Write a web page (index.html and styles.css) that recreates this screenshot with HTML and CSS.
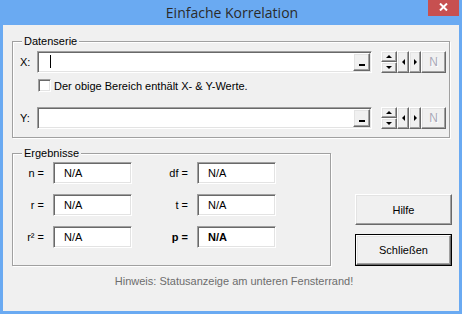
FILE: index.html
```html
<!DOCTYPE html>
<html lang="de">
<head>
<meta charset="utf-8">
<title>Einfache Korrelation</title>
<link rel="stylesheet" href="styles.css">
</head>
<body>
<div class="window">
  <div class="titlebar">
    <span class="title">Einfache Korrelation</span>
    <div class="close">
      <svg width="9" height="8" viewBox="0 0 9 8"><path d="M1 0.5 L8 7.5 M8 0.5 L1 7.5" stroke="#fff" stroke-width="2"/></svg>
    </div>
  </div>
  <div class="client">
    <div class="group g1">
      <span class="legend">Datenserie</span>
      <div class="row">
        <span class="lbl">X:</span>
        <div class="refedit">
          <span class="caret"></span>
          <div class="ddbtn raised"><span class="bar"></span></div>
        </div>
        <div class="spin">
          <div class="raised half"><span class="tri up"></span></div>
          <div class="raised half"><span class="tri down"></span></div>
        </div>
        <div class="raised arr"><span class="tri left"></span></div>
        <div class="raised arr"><span class="tri right"></span></div>
        <div class="raised nbtn">N</div>
      </div>
      <div class="check"><span class="cbox"></span><span>Der obige Bereich enthält X- &amp; Y-Werte.</span></div>
      <div class="row row-y">
        <span class="lbl">Y:</span>
        <div class="refedit">
          <div class="ddbtn raised"><span class="bar"></span></div>
        </div>
        <div class="spin">
          <div class="raised half"><span class="tri up"></span></div>
          <div class="raised half"><span class="tri down"></span></div>
        </div>
        <div class="raised arr"><span class="tri left"></span></div>
        <div class="raised arr"><span class="tri right"></span></div>
        <div class="raised nbtn">N</div>
      </div>
    </div>
    <div class="lower">
      <div class="group g2">
        <span class="legend">Ergebnisse</span>
        <div class="results">
          <span class="rl">n =</span><div class="val">N/A</div>
          <span class="rl">df =</span><div class="val">N/A</div>
          <span class="rl">r =</span><div class="val">N/A</div>
          <span class="rl">t =</span><div class="val">N/A</div>
          <span class="rl">r² =</span><div class="val">N/A</div>
          <span class="rl bold">p =</span><div class="val bold">N/A</div>
        </div>
      </div>
      <div class="buttons">
        <div class="btn raised">Hilfe</div>
        <div class="btn-default"><div class="btn raised">Schließen</div></div>
      </div>
    </div>
    <div class="hint">Hinweis: Statusanzeige am unteren Fensterrand!</div>
  </div>
</div>
</body>
</html>
```
FILE: styles.css
```css
* { box-sizing: border-box; }
body {
  margin: 0;
  font-family: "Liberation Sans", Arial, sans-serif;
  font-size: 11px;
  color: #000;
}
.window {
  width: 462px;
  height: 314px;
  background: #6aaaf2;
  padding: 0 3px 3px;
  display: flex;
  flex-direction: column;
}
.titlebar {
  height: 25px;
  position: relative;
  display: flex;
  justify-content: center;
  align-items: center;
}
.title {
  font-family: "Open Sans", "Noto Sans", sans-serif;
  font-size: 14px;
  color: #2a2a2a;
  padding-left: 2px;
  padding-bottom: 1px;
}
.close {
  position: absolute;
  right: 0;
  top: 0;
  width: 31px;
  height: 16px;
  background: #c75050;
  display: flex;
  align-items: center;
  justify-content: center;
  padding-bottom: 3px;
}
.client {
  flex: 1;
  background: #f0f0f0;
  padding: 16px 0 0 9px;
  display: flex;
  flex-direction: column;
}
.group {
  position: relative;
  border: 1px solid #a0a0a0;
  box-shadow: 1px 1px 0 #fff, inset 1px 1px 0 #fff;
}
.legend {
  position: absolute;
  top: -8px;
  left: 9px;
  padding: 0 2px;
  background: #f0f0f0;
  line-height: 14px;
}
.g1 {
  width: 438px;
  height: 97px;
  padding: 9px 0 0 7px;
}
.row {
  display: flex;
  height: 22px;
}
.row-y { margin-top: 15px; }
.lbl {
  width: 17px;
  line-height: 22px;
}
.refedit {
  position: relative;
  width: 335px;
  height: 22px;
  background: #fff;
  border: 1px solid;
  border-color: #a0a0a0 #fff #fff #a0a0a0;
  box-shadow: inset 1px 1px 0 #696969, inset -1px -1px 0 #e3e3e3;
  display: flex;
  justify-content: flex-end;
  padding: 1px 1px 1px 2px;
}
.caret {
  position: absolute;
  left: 12px;
  top: 3px;
  width: 1px;
  height: 13px;
  background: #000;
}
.raised {
  background: #f0f0f0;
  border: 1px solid;
  border-color: #fff #696969 #696969 #fff;
  box-shadow: inset -1px -1px 0 #a0a0a0, inset 1px 1px 0 #e3e3e3;
}
.ddbtn {
  width: 17px;
  height: 100%;
  display: flex;
  justify-content: center;
  align-items: flex-end;
  padding-bottom: 4px;
}
.bar {
  width: 6px;
  height: 2px;
  background: #000;
}
.spin {
  margin-left: 9px;
  width: 16px;
  display: flex;
  flex-direction: column;
}
.half {
  height: 11px;
  display: flex;
  align-items: center;
  justify-content: center;
}
.arr {
  width: 12px;
  display: flex;
  align-items: center;
  justify-content: center;
}
.tri {
  width: 0;
  height: 0;
  border: 3px solid transparent;
}
.tri.up { border-bottom-color: #000; border-top-width: 0; }
.tri.down { border-top-color: #000; border-bottom-width: 0; }
.tri.left { border-right-color: #000; border-left-width: 0; }
.tri.right { border-left-color: #000; border-right-width: 0; }
.nbtn {
  width: 25px;
  display: flex;
  align-items: center;
  justify-content: center;
  font-size: 12px;
  color: #a8a8b8;
  text-shadow: 1px 1px 0 #fff;
}
.check {
  margin-top: 6px;
  padding-left: 18px;
  height: 13px;
  display: flex;
  align-items: center;
  gap: 3px;
}
.cbox {
  width: 13px;
  height: 13px;
  background: #fff;
  border: 1px solid;
  border-color: #a0a0a0 #fff #fff #a0a0a0;
  box-shadow: inset 1px 1px 0 #696969, inset -1px -1px 0 #e3e3e3;
}
.lower {
  margin-top: 15px;
  display: flex;
}
.g2 {
  width: 319px;
  height: 113px;
  padding-top: 8px;
}
.results {
  display: grid;
  grid-template-columns: 40px 79px 65px 79px;
  grid-auto-rows: 22px;
  row-gap: 10px;
}
.rl {
  text-align: right;
  padding-right: 9px;
  line-height: 22px;
}
.val {
  background: #fff;
  border: 1px solid;
  border-color: #a0a0a0 #fff #fff #a0a0a0;
  box-shadow: inset 1px 1px 0 #696969, inset -1px -1px 0 #e3e3e3;
  padding-left: 10px;
  line-height: 20px;
}
.bold { font-weight: bold; }
.buttons {
  margin-left: 24px;
  padding-top: 41px;
  display: flex;
  flex-direction: column;
  gap: 9px;
}
.btn {
  width: 97px;
  height: 31px;
  display: flex;
  align-items: center;
  justify-content: center;
}
.btn-default {
  border: 1px solid #000;
  width: 97px;
  height: 32px;
}
.btn-default .btn {
  width: 95px;
  height: 30px;
}
.hint {
  margin-top: 9px;
  text-align: center;
  color: #6d6d6d;
  line-height: 13px;
  padding-right: 3px;
}
```
